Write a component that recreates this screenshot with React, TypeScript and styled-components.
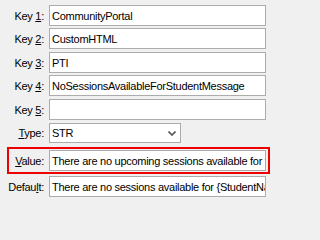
import React from 'react'
import styled, { createGlobalStyle } from 'styled-components'

const Global = createGlobalStyle`
	html, body {
		margin: 0;
		padding: 0;
		background: #f0f0f0;
	}
	body {
		font-family: 'Liberation Sans', Arial, sans-serif;
		font-size: 11px;
		letter-spacing: -0.27px;
		color: #000;
	}
`

const Form = styled.div`
	display: flex;
	flex-direction: column;
	padding-top: 5px;
	width: 271px;
	height: 202px;
	box-sizing: border-box;
`

const Row = styled.div<{ $top: number; $highlight?: boolean }>`
	position: relative;
	display: grid;
	grid-template-columns: 44px 217px;
	column-gap: 5px;
	align-items: center;
	margin-top: ${(p) => p.$top}px;

	${(p) =>
		p.$highlight &&
		`
		&::after {
			content: '';
			position: absolute;
			left: 7px;
			right: 1px;
			top: -3px;
			bottom: -3px;
			border: 2px solid #ee0000;
			pointer-events: none;
		}
	`}
`

const Label = styled.label`
	text-align: right;
	white-space: nowrap;
	color: #000;
`

const Key = styled.span`
	text-decoration: underline;
	text-underline-offset: 1px;
`

const Field = styled.div`
	height: 21px;
	box-sizing: border-box;
	border: 1px solid #acacac;
	background: #fff;
	padding: 0 2px;
	display: flex;
	align-items: center;
	white-space: nowrap;
	overflow: hidden;
`

const Combo = styled(Field)`
	width: 132px;
	height: 20px;
	justify-content: space-between;
	padding-right: 4px;
`

const Chevron = () => (
	<svg width="8" height="5" viewBox="0 0 8 5">
		<path d="M0.5 0.5 L4 4 L7.5 0.5" stroke="#555" strokeWidth="1.6" fill="none" />
	</svg>
)

const keys = ['CommunityPortal', 'CustomHTML', 'PTI', 'NoSessionsAvailableForStudentMessage', '']
const gaps = [0, 2, 3, 2, 3]

export default function App() {
	return (
		<>
			<Global />
			<Form>
				{keys.map((k, i) => (
					<Row key={i} $top={gaps[i]}>
						<Label>
							Key <Key>{i + 1}</Key>:
						</Label>
						<Field>{k}</Field>
					</Row>
				))}
				<Row $top={3}>
					<Label>
						<Key>T</Key>ype:
					</Label>
					<Combo>
						<span>STR</span>
						<Chevron />
					</Combo>
				</Row>
				<Row $top={7} $highlight>
					<Label>
						<Key>V</Key>alue:
					</Label>
					<Field>There are no upcoming sessions available for this student</Field>
				</Row>
				<Row $top={5}>
					<Label>
						Defau<Key>l</Key>t:
					</Label>
					<Field>There are no sessions available for {'{StudentName}'}</Field>
				</Row>
			</Form>
		</>
	)
}
